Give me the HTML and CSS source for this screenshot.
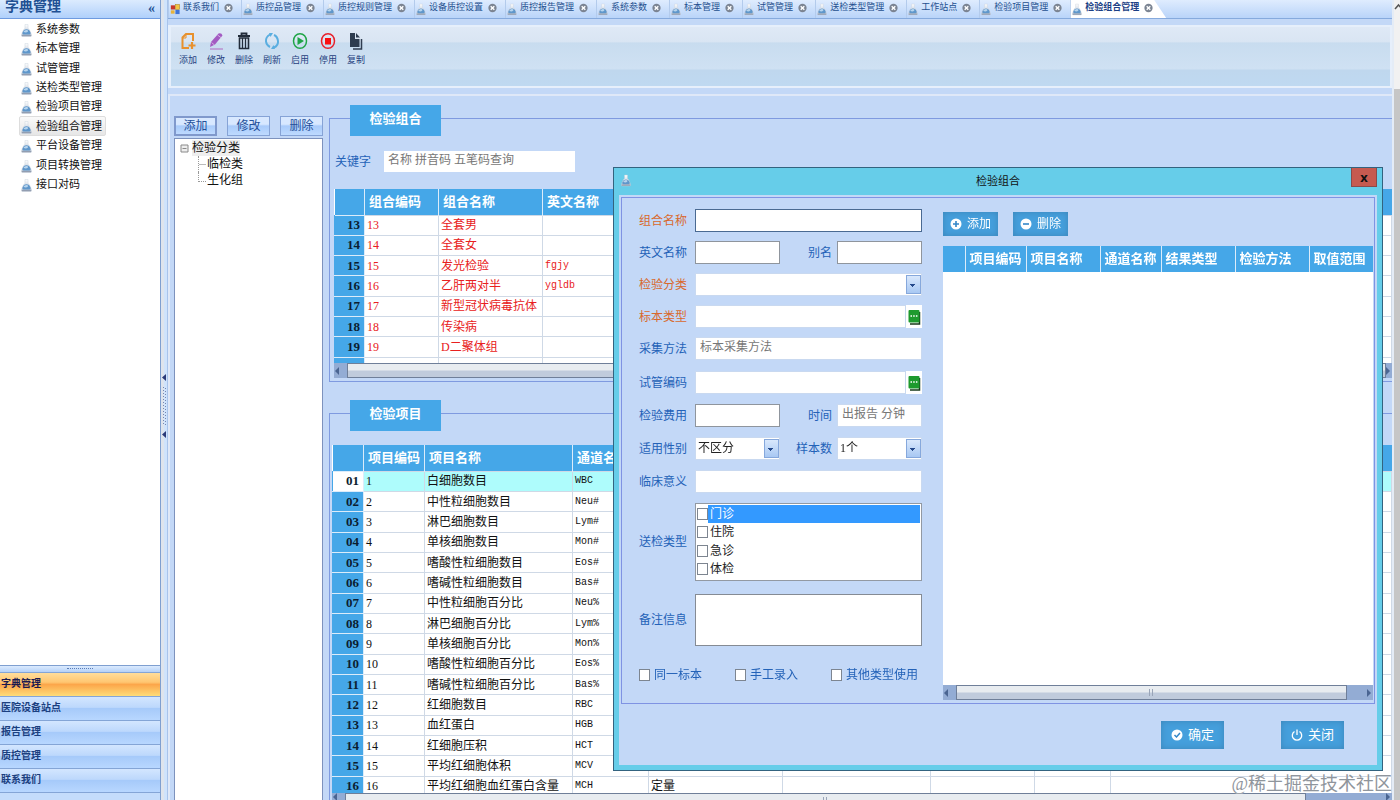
FILE: index.html
```html
<!DOCTYPE html>
<html lang="zh-CN">
<head>
  <meta charset="UTF-8" />
  <meta name="viewport" content="width=device-width, initial-scale=1.0"/>
  <title>检验组合管理</title>
  <link rel="stylesheet" href="styles.css">
</head>
<body>
  <svg class="defs" aria-hidden="true">
    <linearGradient id="glass" x1="0" y1="0" x2="0" y2="1">
      <stop offset="0" stop-color="#ffffff"/>
      <stop offset="1" stop-color="#aab6c8"/>
    </linearGradient>
    <symbol id="flask" viewBox="0 0 12 14">
      <path d="M4.3 0.5h3.400v4q1.500 1 2.800 4.500l1 3q0.300 1.500-1 1.500h-9q-1.300 0-1-1.500l1-3q1.300-3.500 2.800-4.500z" fill="url(#glass)" stroke="#c9d2de" stroke-width="0.500"/>
      <path d="M1.600 9.500q1.200-3.800 4.400-3.800t4.400 3.800q0.400 1.900-1.200 1.900H2.800q-1.600 0-1.200-1.900z" fill="#5f97cb"/>
      <path d="M2.600 8.400q1.500-2.200 3.600-2 2.200 0.400 1.400 1.800-2.200 2-5 0.200z" fill="#b7d5ee"/>
      <path d="M1 12.600h10" stroke="#8b97aa" stroke-width="1"/>
    </symbol>
    <symbol id="close" viewBox="0 0 10 10">
      <circle cx="5" cy="5" r="4.6" fill="#7b8492"/>
      <path d="M3 3l4 4M7 3l-4 4" stroke="#fff" stroke-width="1.6"/>
    </symbol>
  </svg>

  <aside class="sidebar">
    <h1 class="side-title">字典管理 <button class="collapse" aria-label="收起">«</button></h1>
    <ul class="side-list">
      <li><svg><use href="#flask"/></svg><a href="#">系统参数</a></li>
      <li><svg><use href="#flask"/></svg><a href="#">标本管理</a></li>
      <li><svg><use href="#flask"/></svg><a href="#">试管管理</a></li>
      <li><svg><use href="#flask"/></svg><a href="#">送检类型管理</a></li>
      <li><svg><use href="#flask"/></svg><a href="#">检验项目管理</a></li>
      <li class="current"><svg><use href="#flask"/></svg><a href="#">检验组合管理</a></li>
      <li><svg><use href="#flask"/></svg><a href="#">平台设备管理</a></li>
      <li><svg><use href="#flask"/></svg><a href="#">项目转换管理</a></li>
      <li><svg><use href="#flask"/></svg><a href="#">接口对码</a></li>
    </ul>
    <div class="side-grip"></div>
    <nav class="side-groups">
      <button class="on">字典管理</button>
      <button>医院设备站点</button>
      <button>报告管理</button>
      <button>质控管理</button>
      <button>联系我们</button>
      <div class="side-foot"></div>
    </nav>
  </aside>

  <div class="splitter">
    <svg viewBox="0 0 6 64">
      <path d="M5 0v7L1 3.500zM5 57v7L1 60.500z" fill="#2b3a78"/>
      <path d="M2.500 13v38M4.500 14v38" stroke="#7686b0" stroke-dasharray="1 2"/>
    </svg>
  </div>

  <main class="main">
    <nav class="tabs">
      <a href="#" class="tab">
        <svg viewBox="0 0 12 14"><rect x="1" y="2" width="5" height="5" fill="#c8372a"/><rect x="6.500" y="1" width="5" height="6" fill="#f5c542" stroke="#a67c1a" stroke-width="0.600"/><rect x="1" y="8" width="4.500" height="4" fill="#e8b33b"/><rect x="6.500" y="7.500" width="5" height="5" fill="#3f74d8"/></svg>
        联系我们<svg class="x"><use href="#close"/></svg></a>
      <a href="#" class="tab"><svg><use href="#flask"/></svg>质控品管理<svg class="x"><use href="#close"/></svg></a>
      <a href="#" class="tab"><svg><use href="#flask"/></svg>质控规则管理<svg class="x"><use href="#close"/></svg></a>
      <a href="#" class="tab"><svg><use href="#flask"/></svg>设备质控设置<svg class="x"><use href="#close"/></svg></a>
      <a href="#" class="tab"><svg><use href="#flask"/></svg>质控报告管理<svg class="x"><use href="#close"/></svg></a>
      <a href="#" class="tab"><svg><use href="#flask"/></svg>系统参数<svg class="x"><use href="#close"/></svg></a>
      <a href="#" class="tab"><svg><use href="#flask"/></svg>标本管理<svg class="x"><use href="#close"/></svg></a>
      <a href="#" class="tab"><svg><use href="#flask"/></svg>试管管理<svg class="x"><use href="#close"/></svg></a>
      <a href="#" class="tab"><svg><use href="#flask"/></svg>送检类型管理<svg class="x"><use href="#close"/></svg></a>
      <a href="#" class="tab"><svg><use href="#flask"/></svg>工作站点<svg class="x"><use href="#close"/></svg></a>
      <a href="#" class="tab"><svg><use href="#flask"/></svg>检验项目管理<svg class="x"><use href="#close"/></svg></a>
      <a href="#" class="tab active"><svg><use href="#flask"/></svg>检验组合管理<svg class="x"><use href="#close"/></svg></a>
    </nav>

    <div class="toolbar">
      <button><svg viewBox="0 0 16 18"><path d="M9 16H2.500V5.500L6 2h7v7" fill="none" stroke="#e8912d" stroke-width="2"/><path d="M2 6h4V2" fill="none" stroke="#e8912d"/><path d="M12 10v7M8.500 13.500h7" stroke="#e8912d" stroke-width="2.200"/></svg>添加</button>
      <button><svg viewBox="0 0 16 18"><path d="M2 15l1-5L10.500 1.500q3-1 4 2L7 12.500z" fill="#a35bc2"/><path d="M3.500 10.500l3 2.500M9.500 3l4 3" stroke="#dcc3ea" stroke-width="0.800"/><path d="M2 17h13" stroke="#b98fd0" stroke-width="1.500"/></svg>修改</button>
      <button><svg viewBox="0 0 16 18"><path d="M2 4h12M5.500 3.500V1.500h5v2" fill="none" stroke="#222c3a" stroke-width="1.800"/><path d="M3.500 6h9v10.500h-9z" fill="none" stroke="#222c3a" stroke-width="1.600"/><path d="M6.500 6v10M9.500 6v10" stroke="#222c3a" stroke-width="1.300"/></svg>删除</button>
      <button><svg viewBox="0 0 16 18"><path d="M6 2.500Q1.500 5 2 9.500q0.500 4 4 5.500M10 15.500q4.500-2 4-6.500-0.500-4.500-4-6" fill="none" stroke="#5aaee0" stroke-width="2"/><path d="M5 1h4L6.500 5zM11 17H7l2.500-4z" fill="#5aaee0"/></svg>刷新</button>
      <button><svg viewBox="0 0 16 18"><ellipse cx="8" cy="9" rx="6.500" ry="7.300" fill="none" stroke="#1fa547" stroke-width="1.500"/><path d="M5.500 5l6.500 4-6.500 4z" fill="#1fa547"/></svg>启用</button>
      <button><svg viewBox="0 0 16 18"><ellipse cx="8" cy="9" rx="6.500" ry="7.300" fill="none" stroke="#e8212c" stroke-width="1.500"/><rect x="5" y="6" width="6" height="6.500" fill="#fb1010"/></svg>停用</button>
      <button><svg viewBox="0 0 16 18"><path d="M2 1h5v6h4.500v8H2z" fill="#2f3d50"/><path d="M8 1l4 4.500H8z" fill="#2f3d50"/><path d="M13.500 7v10H5" fill="none" stroke="#2f3d50" stroke-width="1.500"/></svg>复制</button>
    </div>

    <div class="work">
      <section class="classes">
        <div class="class-btns">
          <button class="focus">添加</button>
          <button>修改</button>
          <button>删除</button>
        </div>
        <div class="tree">
          <div class="root"><svg viewBox="0 0 9 9"><path d="M1 1h7v7H1zM2.500 4.500h4" fill="#eee" stroke="#8a8a8a"/></svg><span>检验分类</span></div>
          <ul>
            <li>临检类</li>
            <li>生化组</li>
          </ul>
        </div>
      </section>

      <section class="panels">
        <div class="group">
          <h2 class="badge">检验组合</h2>
          <div class="search">
            <label for="keyword">关键字</label>
            <input type="text" id="keyword" placeholder="名称 拼音码 五笔码查询">
          </div>
          <div class="grid-wrap combos">
            <table class="grid">
              <colgroup><col class="c30"><col class="c74"><col class="c104"><col></colgroup>
              <thead><tr><th></th><th>组合编码</th><th>组合名称</th><th>英文名称</th></tr></thead>
              <tbody>
                <tr><th>13</th><td>13</td><td>全套男</td><td></td></tr>
                <tr><th>14</th><td>14</td><td>全套女</td><td></td></tr>
                <tr><th>15</th><td>15</td><td>发光检验</td><td class="code">fgjy</td></tr>
                <tr><th>16</th><td>16</td><td>乙肝两对半</td><td class="code">ygldb</td></tr>
                <tr><th>17</th><td>17</td><td>新型冠状病毒抗体</td><td></td></tr>
                <tr><th>18</th><td>18</td><td>传染病</td><td></td></tr>
                <tr><th>19</th><td>19</td><td>D二聚体组</td><td></td></tr>
                <tr><th>&nbsp;</th><td></td><td></td><td></td></tr>
              </tbody>
            </table>
          </div>
          <div class="hscroll"><i class="left"></i><b></b><i class="right"></i></div>
        </div>

        <div class="group items">
          <h2 class="badge">检验项目</h2>
          <div class="grid-wrap">
            <table class="grid">
              <colgroup><col class="c31"><col class="c61"><col class="c148"><col class="c76"><col class="c134"><col class="c148"><col class="c104"><col class="c76"><col></colgroup>
              <thead><tr><th></th><th>项目编码</th><th>项目名称</th><th>通道名称</th><th></th><th></th><th></th><th></th><th></th></tr></thead>
              <tbody>
                <tr class="selected"><th>01</th><td>1</td><td>白细胞数目</td><td class="code">WBC</td><td></td><td></td><td></td><td></td><td></td></tr>
                <tr><th>02</th><td>2</td><td>中性粒细胞数目</td><td class="code">Neu#</td><td></td><td></td><td></td><td></td><td></td></tr>
                <tr><th>03</th><td>3</td><td>淋巴细胞数目</td><td class="code">Lym#</td><td></td><td></td><td></td><td></td><td></td></tr>
                <tr><th>04</th><td>4</td><td>单核细胞数目</td><td class="code">Mon#</td><td></td><td></td><td></td><td></td><td></td></tr>
                <tr><th>05</th><td>5</td><td>嗜酸性粒细胞数目</td><td class="code">Eos#</td><td></td><td></td><td></td><td></td><td></td></tr>
                <tr><th>06</th><td>6</td><td>嗜碱性粒细胞数目</td><td class="code">Bas#</td><td></td><td></td><td></td><td></td><td></td></tr>
                <tr><th>07</th><td>7</td><td>中性粒细胞百分比</td><td class="code">Neu%</td><td></td><td></td><td></td><td></td><td></td></tr>
                <tr><th>08</th><td>8</td><td>淋巴细胞百分比</td><td class="code">Lym%</td><td></td><td></td><td></td><td></td><td></td></tr>
                <tr><th>09</th><td>9</td><td>单核细胞百分比</td><td class="code">Mon%</td><td></td><td></td><td></td><td></td><td></td></tr>
                <tr><th>10</th><td>10</td><td>嗜酸性粒细胞百分比</td><td class="code">Eos%</td><td></td><td></td><td></td><td></td><td></td></tr>
                <tr><th>11</th><td>11</td><td>嗜碱性粒细胞百分比</td><td class="code">Bas%</td><td></td><td></td><td></td><td></td><td></td></tr>
                <tr><th>12</th><td>12</td><td>红细胞数目</td><td class="code">RBC</td><td></td><td></td><td></td><td></td><td></td></tr>
                <tr><th>13</th><td>13</td><td>血红蛋白</td><td class="code">HGB</td><td></td><td></td><td></td><td></td><td></td></tr>
                <tr><th>14</th><td>14</td><td>红细胞压积</td><td class="code">HCT</td><td></td><td></td><td></td><td></td><td></td></tr>
                <tr><th>15</th><td>15</td><td>平均红细胞体积</td><td class="code">MCV</td><td>定量</td><td></td><td></td><td></td><td></td></tr>
                <tr><th>16</th><td>16</td><td>平均红细胞血红蛋白含量</td><td class="code">MCH</td><td>定量</td><td></td><td></td><td></td><td></td></tr>
              </tbody>
            </table>
          </div>
          <div class="hscroll short"><i class="left"></i><b></b><i class="right"></i></div>
        </div>
      </section>
    </div>
  </main>

  <div class="page-scroll">
    <svg viewBox="0 0 8 8"><path d="M1 6l3.500-4L8 6" fill="none" stroke="#555" stroke-width="1.500"/></svg>
    <div class="thumb"></div>
  </div>

  <div class="dialog" role="dialog" aria-labelledby="dlgTitle">
    <header class="dlg-head">
      <svg><use href="#flask"/></svg>
      <h2 id="dlgTitle">检验组合</h2>
      <button class="dlg-close" aria-label="关闭窗口">x</button>
    </header>
    <div class="dlg-body">
      <div class="dlg-group">
        <form class="form">
          <div class="rows">
            <div class="row"><label class="must" for="fName">组合名称</label><input class="line dark" type="text" id="fName" autofocus></div>
            <div class="row"><label for="fEn">英文名称</label><input class="line" type="text" id="fEn"><label for="fAlias">别名</label><input class="line" type="text" id="fAlias"></div>
            <div class="row"><label class="must" for="fClass">检验分类</label><span class="pick"><select id="fClass"><option></option></select></span></div>
            <div class="row"><label class="must" for="fSample">标本类型</label><input type="text" id="fSample"><button type="button" class="more" aria-label="选择标本"><svg viewBox="0 0 13 16"><path d="M2 15h9.500V3" fill="none" stroke="#173a1a" stroke-width="1.500"/><rect x="0.500" y="1" width="11" height="12.500" rx="1" fill="#1e9a2e"/><path d="M2.500 7h7" stroke="#fff" stroke-width="1.500" stroke-dasharray="1.500 1.200"/></svg></button></div>
            <div class="row"><label for="fMethod">采集方法</label><input type="text" id="fMethod" placeholder="标本采集方法"></div>
          </div>
          <div class="rows wide">
            <div class="row"><label for="fTube">试管编码</label><input type="text" id="fTube"><button type="button" class="more" aria-label="选择试管"><svg viewBox="0 0 13 16"><path d="M2 15h9.500V3" fill="none" stroke="#173a1a" stroke-width="1.500"/><rect x="0.500" y="1" width="11" height="12.500" rx="1" fill="#1e9a2e"/><path d="M2.500 7h7" stroke="#fff" stroke-width="1.500" stroke-dasharray="1.500 1.200"/></svg></button></div>
            <div class="row"><label for="fFee">检验费用</label><input class="line" type="text" id="fFee"><label for="fTime">时间</label><input type="text" id="fTime" placeholder="出报告 分钟"></div>
            <div class="row"><label for="fSex">适用性别</label><span class="pick"><select id="fSex"><option>不区分</option></select></span><label for="fCount">样本数</label><span class="pick"><select id="fCount"><option>1个</option></select></span></div>
            <div class="row"><label for="fMean">临床意义</label><input type="text" id="fMean"></div>
            <div class="row"><span class="label" id="kinds">送检类型</span>
              <div class="checklist" role="group" aria-labelledby="kinds">
                <label class="on"><input type="checkbox"><span>门诊</span></label>
                <label><input type="checkbox"><span>住院</span></label>
                <label><input type="checkbox"><span>急诊</span></label>
                <label><input type="checkbox"><span>体检</span></label>
              </div>
            </div>
          </div>
          <div class="row note"><label for="fNote">备注信息</label><textarea id="fNote"></textarea></div>
          <div class="flags">
            <label><input type="checkbox">同一标本</label>
            <label><input type="checkbox">手工录入</label>
            <label><input type="checkbox">其他类型使用</label>
          </div>
        </form>

        <div class="detail">
          <div class="detail-btns">
            <button class="blue"><svg viewBox="0 0 12 12"><circle cx="6" cy="6" r="5.500" fill="#fff"/><path d="M6 3v6M3 6h6" stroke="#3487c8" stroke-width="1.600"/></svg>添加</button>
            <button class="blue"><svg viewBox="0 0 12 12"><circle cx="6" cy="6" r="5.500" fill="#fff"/><path d="M3 6h6" stroke="#3487c8" stroke-width="1.600"/></svg>删除</button>
          </div>
          <div class="detail-grid">
            <table class="grid">
              <colgroup><col class="c22"><col class="c61"><col class="c74"><col class="c61"><col class="c74"><col class="c74"><col></colgroup>
              <thead><tr><th></th><th>项目编码</th><th>项目名称</th><th>通道名称</th><th>结果类型</th><th>检验方法</th><th>取值范围</th></tr></thead>
            </table>
          </div>
          <div class="hscroll inner"><i class="left"></i><b></b><i class="right"></i></div>
        </div>
      </div>
      <footer class="dlg-foot">
        <button class="blue"><svg viewBox="0 0 12 12"><circle cx="6" cy="6" r="5.500" fill="#fff"/><path d="M3.500 6l2 2 3.500-4" fill="none" stroke="#3487c8" stroke-width="1.500"/></svg>确定</button>
        <button class="blue"><svg viewBox="0 0 12 12"><path d="M3.500 2.500a4.700 4.700 0 1 0 5 0M6 0.500v5.500" fill="none" stroke="#fff" stroke-width="1.300"/></svg>关闭</button>
      </footer>
    </div>
  </div>

  <div class="watermark">@稀土掘金技术社区</div>
</body>
</html>
```

FILE: styles.css
```css
* {
  box-sizing: border-box;
}

body {
  margin: 0;
  height: 100vh;
  display: flex;
  overflow: hidden;
  position: relative;
  font-family: "Liberation Serif", "Noto Sans CJK SC", sans-serif;
  font-size: 12px;
  line-height: 16px;
  color: #111;
  background: #c3d8f7;
}

h1, h2, ul {
  margin: 0;
  padding: 0;
}

li {
  list-style: none;
}

a {
  color: inherit;
  text-decoration: none;
}

button, input, select, textarea {
  font: inherit;
  color: inherit;
  margin: 0;
  padding: 0;
  border: 0;
  border-radius: 0;
}

svg {
  display: block;
  flex: none;
}

.defs {
  position: absolute;
  width: 0;
  height: 0;
}

/* sidebar */
.sidebar {
  width: 161px;
  flex: none;
  display: flex;
  flex-direction: column;
  background: #fff;
  border-right: 1px solid #7f9fd0;
}

.side-title {
  display: flex;
  justify-content: space-between;
  height: 19px;
  padding: 0 5px;
  font-size: 14px;
  line-height: 14px;
  color: #215093;
  background: linear-gradient(#dcebfe, #b0d0fb);
  border-bottom: 1px solid #6f9be0;
}

.collapse {
  background: none;
  font-size: 14px;
  line-height: 12px;
}

.side-list {
  display: grid;
  grid-auto-rows: 1fr;
  height: 175px;
  font-size: 11px;
}

.side-list li {
  display: flex;
  align-items: center;
  gap: 4px;
  width: max-content;
  margin-left: 19px;
  padding: 0 3px 0 1px;
  border: 1px solid transparent;
}

.side-list svg {
  width: 11px;
  height: 13px;
  margin-top: 3px;
}

.side-list .current {
  background: linear-gradient(#fafafa, #e6e6e6);
  border-color: #ddd;
  border-radius: 2px;
}

.side-grip {
  height: 7px;
  margin-top: auto;
  overflow: hidden;
  border-top: 1px solid #7f9fd0;
  background: linear-gradient(#dcebfe, #b5d1f8);
}

.side-grip::after {
  content: "";
  display: block;
  width: 26px;
  margin: 2px auto;
  border-top: 1px dotted #5a7db8;
}

.side-groups button {
  display: block;
  width: 100%;
  height: 24px;
  padding: 0 0 2px 1px;
  text-align: left;
  font-size: 10px;
  font-weight: bold;
  color: #1b3f80;
  background: linear-gradient(#d3e6ff 0%, #bdd8fc 45%, #a6cafa 50%, #b8d7ff 100%);
  border-top: 1px solid #84a5d6;
}

.side-groups .on {
  color: #1a1a50;
  background: linear-gradient(#ffdd9b 0%, #ffc671 40%, #fca64a 50%, #fedc78 100%);
}

.side-foot {
  height: 8px;
  background: #c4dcfb;
  border-top: 1px solid #84a5d6;
}

.splitter {
  width: 7px;
  flex: none;
  display: flex;
  align-items: center;
  border-right: 1px solid #a9c3ea;
  background: linear-gradient(to right, #dfe4ec 40%, #cfe3fc 60%);
}

.splitter svg {
  width: 6px;
  height: 64px;
  margin-top: 12px;
}

/* tab strip */
.main {
  flex: 1;
  min-width: 0;
  display: flex;
  flex-direction: column;
}

.tabs {
  display: flex;
  height: 19px;
  flex: none;
  overflow: hidden;
  background: linear-gradient(#dfecfe, #b9d4f9);
  border-bottom: 1px solid #86aadd;
}

.tab {
  display: flex;
  flex: none;
  align-items: center;
  gap: 3px;
  padding: 0 9px 4px 1px;
  font-size: 9px;
  color: #24508f;
  border-left: 1px solid #b3cbec;
  white-space: nowrap;
}

.tab svg {
  width: 10px;
  height: 13px;
  margin-top: 4px;
}

.tab .x {
  width: 9px;
  height: 10px;
  margin: 1px -1px 0 2px;
}

.tab.active {
  padding-right: 14px;
  background: #fff;
  color: #1c3f85;
  font-weight: bold;
  clip-path: polygon(0 0, calc(100% - 12px) 0, 100% 100%, 0 100%);
}

/* toolbar */
.toolbar {
  display: flex;
  flex: none;
  height: 63px;
  margin-top: 6px;
  padding: 5px 3px;
  border: 2px solid #e6effb;
  border-left-width: 3px;
  background: linear-gradient(#dfe9f6 0%, #d9e5f3 25%, #c8dcef 27%, #cfe1f3 71%, #bfd7ee 73%, #bfd9f1 100%);
}

.toolbar button {
  display: flex;
  flex-direction: column;
  align-items: center;
  gap: 4px;
  width: 28px;
  font-size: 9px;
  line-height: 13px;
  color: #263f80;
  background: none;
}

.toolbar svg {
  width: 16px;
  height: 18px;
}

/* working area */
.work {
  flex: 1;
  min-height: 0;
  display: flex;
  gap: 6px;
  margin-top: 6px;
  padding-left: 4px;
  border: 2px solid #dfe8f8;
  border-width: 2px 0 0 2px;
}

.classes {
  width: 149px;
  flex: none;
  display: flex;
  flex-direction: column;
  padding-top: 20px;
}

.class-btns {
  display: flex;
  justify-content: space-between;
  height: 22px;
}

.class-btns button {
  width: 43px;
  height: 20px;
  line-height: 16px;
  color: #24509a;
  background: linear-gradient(#d8e8ff 40%, #a9cbfa 50%, #bedaff);
  border: 1px solid #86a3d6;
}

.class-btns .focus {
  border: 2px solid #8099cc;
  line-height: 14px;
}

.tree {
  flex: 1;
  padding: 1px 5px;
  background: #fff;
  border: 1px solid #7d92bd;
  border-bottom: 0;
}

.root {
  display: flex;
  align-items: center;
  gap: 3px;
}

.root svg {
  width: 9px;
  height: 9px;
}

.root span {
  background: #eee;
}

.tree ul {
  margin-left: 18px;
}

.tree li {
  display: flex;
  height: 16px;
}

.tree li::before {
  content: "";
  width: 7px;
  height: 9px;
  margin-right: 1px;
  border: 1px dotted #999;
  border-width: 0 0 1px 1px;
}

.tree li:first-child::before {
  height: 16px;
  border-bottom: 0;
  background: linear-gradient(#bbb, #bbb) 0 8px / 7px 1px no-repeat;
}

.panels {
  flex: 1;
  min-width: 0;
  display: flex;
  flex-direction: column;
  gap: 31px;
  padding-top: 22px;
}

.group {
  height: 264px;
  flex: none;
  display: flex;
  flex-direction: column;
  padding: 0 0 3px 4px;
  border: 1px solid #7f9ae0;
  border-right: 0;
}

.group.items {
  flex: 1 1 0;
  height: auto;
  min-height: 0;
  padding: 0 0 0 2px;
  border-bottom: 0;
}

.badge {
  width: 91px;
  height: 31px;
  flex: none;
  margin: -14px 0 15px 16px;
  text-align: center;
  font-size: 13px;
  line-height: 27px;
  color: #fff;
  background: #45a7e8;
}

.items .badge {
  margin: -14px 0 14px 18px;
}

.search {
  display: flex;
  align-items: center;
  gap: 13px;
  height: 21px;
  flex: none;
  margin-bottom: 17px;
  padding-left: 1px;
  color: #2362b8;
}

.search input {
  width: 191px;
  height: 21px;
  padding: 0 4px 2px;
  background: #fff;
}

::placeholder {
  color: #777;
  opacity: 1;
}

/* grids */
.grid-wrap {
  flex: 1;
  min-height: 0;
  overflow: hidden;
  background: #fff;
}

.grid {
  width: 100%;
  table-layout: fixed;
  border-collapse: collapse;
}

.combos .grid {
  height: 189px;
  color: #e82020;
}

.items .grid {
  height: 352px;
}

.c22 { width: 22px; }
.c30 { width: 30px; }
.c31 { width: 31px; }
.c61 { width: 61px; }
.c74 { width: 74px; }
.c76 { width: 76px; }
.c104 { width: 104px; }
.c134 { width: 134px; }
.c148 { width: 148px; }

.grid thead th {
  height: 26px;
  padding: 0 0 0 4px;
  text-align: left;
  font-size: 13px;
  color: #fff;
  background: #45a7e8;
  border-right: 1px solid #dcecfa;
  white-space: nowrap;
  overflow: hidden;
}

.grid thead th:last-child {
  border-right: 0;
}

.grid tbody th {
  padding: 0 4px 0 0;
  text-align: right;
  font-size: 13px;
  color: #0c1d30;
  background: #45a7e8;
  border: 1px solid #dcecfa;
  border-left-color: #45a7e8;
}

.grid td {
  padding: 0 2px;
  border: 1px solid #cfd9e6;
  white-space: nowrap;
}

.grid td.code {
  font-family: "Liberation Mono", monospace;
  font-size: 10px;
}

.grid .selected th {
  background: #fff;
}

.grid .selected td {
  background: #aefcfc;
}

.hscroll {
  height: 15px;
  flex: none;
  display: flex;
  align-items: center;
  background: #93acd4;
}

.hscroll i {
  border: 4px solid transparent;
}

.hscroll .left {
  margin-right: 4px;
  border-right-color: #4a6592;
  border-left-width: 1px;
}

.hscroll .right {
  margin: 0 1px 0 auto;
  border-left-color: #4a6592;
  border-right-width: 1px;
}

.hscroll b {
  flex: 1;
  height: 100%;
  border: 1px solid #6f7f99;
  background: linear-gradient(90deg, #9aa5b8 1px, transparent 1px 3px, #9aa5b8 3px 4px, transparent 4px) center / 5px 7px no-repeat, linear-gradient(#e8ecf0 45%, #c0cbdc 55%);
}

.hscroll.short {
  height: 7px;
  align-items: flex-start;
}

.hscroll.short b {
  height: 15px;
  margin-right: 80px;
}

.hscroll.short,
.hscroll.inner {
  overflow: hidden;
}

.hscroll b {
  margin-left: 4px;
}

.hscroll.inner b {
  margin-right: 20px;
}

.page-scroll {
  width: 8px;
  flex: none;
  display: flex;
  flex-direction: column;
  background: #f1f1f1;
  border-left: 2px solid #e4ecf6;
}

.page-scroll svg {
  width: 8px;
  height: 8px;
  margin: 3px 0 78px;
}

.page-scroll .thumb {
  flex: 1;
  background: #c6c6c6;
}

/* dialog window */
.dialog {
  position: absolute;
  left: 613px;
  right: 17px;
  top: 167px;
  display: flex;
  flex-direction: column;
  padding: 0 5px 5px;
  background: #66cde9;
  border: 1px solid #33637f;
}

.dlg-head {
  display: flex;
  height: 27px;
}

.dlg-head svg {
  width: 10px;
  height: 13px;
  margin: 6px 0 0 2px;
}

.dlg-head h2 {
  flex: 1;
  padding-left: 14px;
  text-align: center;
  font-size: 11px;
  line-height: 27px;
  font-weight: normal;
}

.dlg-close {
  width: 26px;
  height: 19px;
  font: bold 13px/16px "Open Sans", sans-serif;
  background: #c65a50;
  border: 1px solid #8c4a4a;
  border-top: 0;
}

.dlg-body {
  padding: 2px;
  background: #c3d8f7;
}

.dlg-group {
  display: flex;
  gap: 21px;
  height: 507px;
  padding: 11px 1px 3px 17px;
  border: 1px solid #7f93e3;
}

.form {
  width: 283px;
  flex: none;
  color: #2362b8;
}

.rows {
  display: grid;
  gap: 9px;
  margin-bottom: 11px;
}

.rows.wide {
  gap: 10px;
  margin-bottom: 13px;
}

.row {
  display: flex;
  align-items: center;
}

.row > label,
.row > .label {
  width: 48px;
  flex: none;
  margin-right: 8px;
}

.row > label ~ label {
  width: 52px;
  margin-right: 5px;
  text-align: right;
}

.row .must {
  color: #d9682c;
}

.row input[type="text"],
.row select {
  flex: 1;
  width: 100%;
  min-width: 0;
  height: 23px;
  padding: 0 4px 2px;
  background: #fff;
  border: 1px solid #c9d9f0;
}

.row input.line {
  border-color: #8f959d;
}

.row input.dark {
  padding: 0 1px 2px;
  border-color: #4a6a92;
  outline: none;
}

.pick {
  flex: 1;
  position: relative;
  color: #222;
}

.row select {
  display: block;
  appearance: none;
  padding: 0 2px 2px;
}

.pick::after {
  content: "";
  position: absolute;
  top: 2px;
  right: 1px;
  bottom: 2px;
  width: 13px;
  border: 1px solid #86a8dc;
  background: linear-gradient(#254a8c, #254a8c) 3px 8px / 5px 1px no-repeat, linear-gradient(#254a8c, #254a8c) 4px 9px / 3px 1px no-repeat, linear-gradient(#254a8c, #254a8c) 5px 10px / 1px 1px no-repeat, linear-gradient(#d9e8fc, #a8c8f3);
  pointer-events: none;
}

.more {
  width: 16px;
  height: 23px;
  padding-left: 2px;
  background: #fff;
}

.more svg {
  width: 13px;
  height: 16px;
}

.checklist {
  flex: 1;
  display: grid;
  grid-auto-rows: 1fr;
  height: 78px;
  padding: 1px 1px 2px;
  background: #fff;
  border: 1px solid #9299a3;
  color: #222;
}

.checklist label {
  display: flex;
  align-items: center;
}

.checklist span {
  flex: 1;
  padding-left: 2px;
  line-height: 18px;
}

.checklist .on span {
  color: #fff;
  background: #3399ff;
}

input[type="checkbox"] {
  appearance: none;
  width: 11px;
  height: 12px;
  flex: none;
  background: #fff;
  border: 1px solid #7d8590;
}

textarea {
  display: block;
  flex: 1;
  height: 52px;
  resize: none;
  background: #fff;
  border: 1px solid #858b94;
}

.note {
  margin-bottom: 21px;
}

.flags {
  display: flex;
  gap: 33px;
}

.flags label {
  display: flex;
  align-items: center;
  gap: 4px;
  white-space: nowrap;
}

.detail {
  flex: 1;
  min-width: 0;
  display: flex;
  flex-direction: column;
}

.detail-btns {
  display: flex;
  gap: 15px;
  padding: 3px 0 10px;
}

.blue {
  display: flex;
  align-items: center;
  justify-content: center;
  gap: 5px;
  width: 55px;
  height: 24px;
  font-size: 12px;
  color: #fff;
  background: #459fdc;
  box-shadow: inset 0 0 6px #3c85b8;
}

.blue svg {
  width: 12px;
  height: 12px;
}

.detail-grid {
  flex: 1;
  background: #fff;
}

.dlg-foot {
  display: flex;
  justify-content: flex-end;
  gap: 57px;
  padding: 17px 31px 14px;
}

.dlg-foot .blue {
  width: 63px;
  height: 28px;
  font-size: 13px;
}

.watermark {
  position: absolute;
  right: 8px;
  bottom: 4px;
  font-size: 18px;
  line-height: 24px;
  color: #8f959c;
  text-shadow: 0 0 1px #fff;
}
```
